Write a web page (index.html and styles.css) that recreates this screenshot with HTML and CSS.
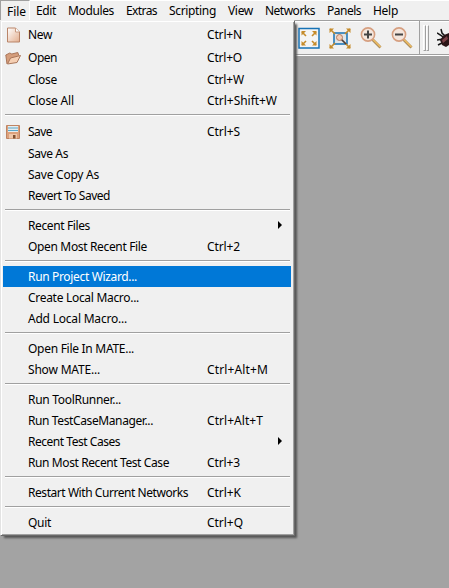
FILE: index.html
```html
<!DOCTYPE html>
<html lang="en">
<head>
<meta charset="utf-8">
<title>Networks</title>
<link rel="stylesheet" href="styles.css">
</head>
<body>
<nav class="menubar">
<span class="top file"><b class="t" data-w="19">File</b></span>
<span class="top"><b class="t" data-w="20">Edit</b></span>
<span class="top"><b class="t" data-w="46">Modules</b></span>
<span class="top"><b class="t" data-w="31">Extras</b></span>
<span class="top"><b class="t" data-w="47">Scripting</b></span>
<span class="top"><b class="t" data-w="25">View</b></span>
<span class="top"><b class="t" data-w="50">Networks</b></span>
<span class="top"><b class="t" data-w="34">Panels</b></span>
<span class="top"><b class="t" data-w="25">Help</b></span>
</nav>
<div class="toolbar">
<div class="tools">
<svg class="tool" width="24" height="24" viewBox="0 0 24 24"><path d="M2 2.500h20v19.500H2z" fill="#f4f4f4" stroke="#1672b5" stroke-width="1.500"/><g stroke="#c58b2b" stroke-width="1.600"><path d="M5 6l4 4M19 6l-4 4M5 19l4-4M19 19l-4-4"/></g><path d="M4.500 5h4.500l-4.500 4.500zM19.500 5h-4.500l4.500 4.500zM4.500 19.500h4.500l-4.500-4.500zM19.500 19.500h-4.500l4.500-4.500z" fill="#c58b2b"/></svg>
<svg class="tool" width="24" height="24" viewBox="0 0 24 24"><path d="M6 7h13v11H6z" fill="#dfe4e7" stroke="#1672b5" stroke-width="1.500"/><path d="M2 3l5 5M22 3l-5 5M2 22l5-5M22 22l-5-5" stroke="#c58b2b" stroke-width="1.600"/><path d="M1.500 2.500h4.500l-4.500 4.500zM22.500 2.500h-4.500l4.500 4.500zM1.500 22.500h4.500l-4.500-4.500zM22.500 22.500h-4.500l4.500-4.500z" fill="#c58b2b"/><path d="M13 13l5 5" stroke="#4d3b34" stroke-width="1.700"/><circle cx="11.500" cy="11.500" r="3" fill="#f3cdb5" stroke="#b67a5f"/></svg>
<svg class="tool" width="24" height="24" viewBox="0 0 24 24"><path d="M13.500 13.500l8 8" stroke="#a98b5c" stroke-width="2.800"/><path d="M14 13.500l7.500 7.500" stroke="#f0bd61" stroke-width="1.400"/><circle cx="9" cy="8.500" r="6.600" fill="#f4e6dd" stroke="#d69f80" stroke-width="1.600"/><path d="M5 8.500h8M9 4.500v8" stroke="#444" stroke-width="2"/></svg>
<svg class="tool" width="24" height="24" viewBox="0 0 24 24"><path d="M13.500 13.500l8 8" stroke="#a98b5c" stroke-width="2.800"/><path d="M14 13.500l7.500 7.500" stroke="#f0bd61" stroke-width="1.400"/><circle cx="9" cy="8.500" r="6.600" fill="#f4e6dd" stroke="#d69f80" stroke-width="1.600"/><path d="M5 8.500h8" stroke="#444" stroke-width="2"/></svg>
</div>
<i class="grip"></i><i class="grip"></i>
<svg class="bug" width="12" height="24" viewBox="0 0 12 24"><path d="M0 7l5 3 2 3M4 3l1 4 3 3M0 14l6-1M1 19l6-3" fill="none" stroke="#161616" stroke-width="1.500"/><path d="M12 7L7 9 3 14l2 5 4 2 3-2z" fill="#2b1517"/><path d="M10 10l-5 4 1 3 5-4z" fill="#7b4147"/></svg>
</div>
<div class="menu">
<div class="row icon"><svg class="ico" width="16" height="16" viewBox="0 0 16 16"><defs><linearGradient id="g" x2="1" y2="1"><stop stop-color="#fff"/><stop offset="1" stop-color="#e3ae8e"/></linearGradient></defs><path d="M2.500 1h8l4 4v10h-12z" fill="url(#g)" stroke="#b98468"/><path d="M10.500 1v4h4" fill="#fff" stroke="#c99a80"/></svg><b class="t" data-w="24">New</b><span class="key"><b class="t" data-w="35">Ctrl+N</b></span></div>
<div class="row icon"><svg class="ico" width="16" height="16" viewBox="0 0 16 16"><path d="M2 14L.8 5l4-2 2 1 6-1.500 1 3" fill="#d59d7b" stroke="#a9765a"/><path d="M2.500 14l3-6L15.500 5.500l-3.500 7z" fill="#f5cfb3" stroke="#a9765a"/></svg><b class="t" data-w="29">Open</b><span class="key"><b class="t" data-w="35">Ctrl+O</b></span></div>
<div class="row"><b class="t" data-w="29">Close</b><span class="key"><b class="t" data-w="37">Ctrl+W</b></span></div>
<div class="row"><b class="t" data-w="46">Close All</b><span class="key"><b class="t" data-w="70">Ctrl+Shift+W</b></span></div>
<hr>
<div class="row icon"><svg class="ico" width="16" height="16" viewBox="0 0 16 16"><path d="M1.500 1.500h13v13h-13z" fill="#dca17c" stroke="#bf8462"/><path d="M3 2h10v6H3z" fill="#e4edf0"/><path d="M3 4h10M3 6.500h10" stroke="#5ca7c9"/><path d="M4 10h8v4.500H4z" fill="#efc6a8"/><path d="M8 11h2.500v3.500H8z" fill="#80502f"/></svg><b class="t" data-w="24">Save</b><span class="key"><b class="t" data-w="33">Ctrl+S</b></span></div>
<div class="row"><b class="t" data-w="40">Save As</b></div>
<div class="row"><b class="t" data-w="71">Save Copy As</b></div>
<div class="row"><b class="t" data-w="82">Revert To Saved</b></div>
<hr>
<div class="row"><b class="t" data-w="62">Recent Files</b><i class="arrow"></i></div>
<div class="row"><b class="t" data-w="119">Open Most Recent File</b><span class="key"><b class="t" data-w="33">Ctrl+2</b></span></div>
<hr>
<div class="row selected"><b class="t" data-w="109">Run Project Wizard...</b></div>
<div class="row"><b class="t" data-w="111">Create Local Macro...</b></div>
<div class="row"><b class="t" data-w="99">Add Local Macro...</b></div>
<hr>
<div class="row"><b class="t" data-w="106">Open File In MATE...</b></div>
<div class="row"><b class="t" data-w="72">Show MATE...</b><span class="key"><b class="t" data-w="61">Ctrl+Alt+M</b></span></div>
<hr>
<div class="row"><b class="t" data-w="93">Run ToolRunner...</b></div>
<div class="row"><b class="t" data-w="125">Run TestCaseManager...</b><span class="key"><b class="t" data-w="56">Ctrl+Alt+T</b></span></div>
<div class="row"><b class="t" data-w="92">Recent Test Cases</b><i class="arrow"></i></div>
<div class="row"><b class="t" data-w="141">Run Most Recent Test Case</b><span class="key"><b class="t" data-w="33">Ctrl+3</b></span></div>
<hr>
<div class="row"><b class="t" data-w="160">Restart With Current Networks</b><span class="key"><b class="t" data-w="34">Ctrl+K</b></span></div>
<hr>
<div class="row"><b class="t" data-w="23">Quit</b><span class="key"><b class="t" data-w="36">Ctrl+Q</b></span></div>
</div>
<script src="fit.js"></script>
</body>
</html>
```
FILE: styles.css
```css
* { box-sizing: border-box; }
body { margin: 0; width: 449px; height: 588px; overflow: hidden; background: #a3a3a3; color: #000; font: 12px/21px "Noto Sans", sans-serif; }
.t { display: inline-block; font-weight: 400; white-space: pre; }
.menubar { height: 20px; border-top: 1px solid #fff; background: #f0f0f0; display: flex; line-height: 20px; }
.top { padding: 0 6px; height: 19px; flex: none; }
.file { width: 30px; margin-top: -1px; height: 20px; padding: 1px 0 0 6px; border: solid; border-width: 1px 1px 0; border-color: #a0a0a0 #fff #fff #a0a0a0; line-height: 20px; }
.toolbar { height: 36px; margin-left: 294px; background: #f0f0f0; border-top: 1px solid #a0a0a0; border-bottom: 1px solid #fff; box-shadow: inset 0 1px #fff, inset 0 -1px #a0a0a0; display: flex; align-items: center; }
.tools { width: 126px; height: 34px; padding-left: 3px; display: flex; align-items: center; gap: 7px; border-right: 1px solid #a0a0a0; margin-right: 3px; }
.tool, .bug { flex: none; }
.grip { width: 3px; height: 26px; border: 1px solid; border-color: #fff #a0a0a0 #a0a0a0 #fff; }
.bug { margin-left: 8px; }
.menu { position: absolute; left: 0; top: 20px; width: 295px; height: 516px; padding: 2px 3px 0 2px; background: #f0f0f0; border: 1px solid; border-color: #f0f0f0 #696969 #696969 #e3e3e3; box-shadow: inset 1px 1px #fff, inset -1px -1px #a0a0a0, 3px 3px 2px -1px #555; }
.row { height: 21px; display: flex; align-items: center; padding-left: 25px; position: relative; }
.row.icon { height: 23px; }
.selected { background: #0078d7; color: #fff; }
.ico { position: absolute; left: 2px; top: 4px; }
.key { position: absolute; left: 204px; }
.arrow { position: absolute; left: 275px; top: 6px; border-left: 4px solid #000; border-top: 4px solid transparent; border-bottom: 4px solid transparent; }
hr { height: 9px; margin: 0 1px 0 2px; border: 0; background: linear-gradient(#a0a0a0, #a0a0a0) 0 3px / 100% 1px no-repeat, linear-gradient(#fff, #fff) 0 4px / 100% 1px no-repeat; }
```
FILE: fit.js
```js
// Spread each label to its nominal width.
document.querySelectorAll('.t').forEach(function (el) {
  var natural = el.getBoundingClientRect().width;
  var want = Number(el.dataset.w);
  el.style.letterSpacing = ((want - natural) / el.textContent.length).toFixed(3) + 'px';
});
```
